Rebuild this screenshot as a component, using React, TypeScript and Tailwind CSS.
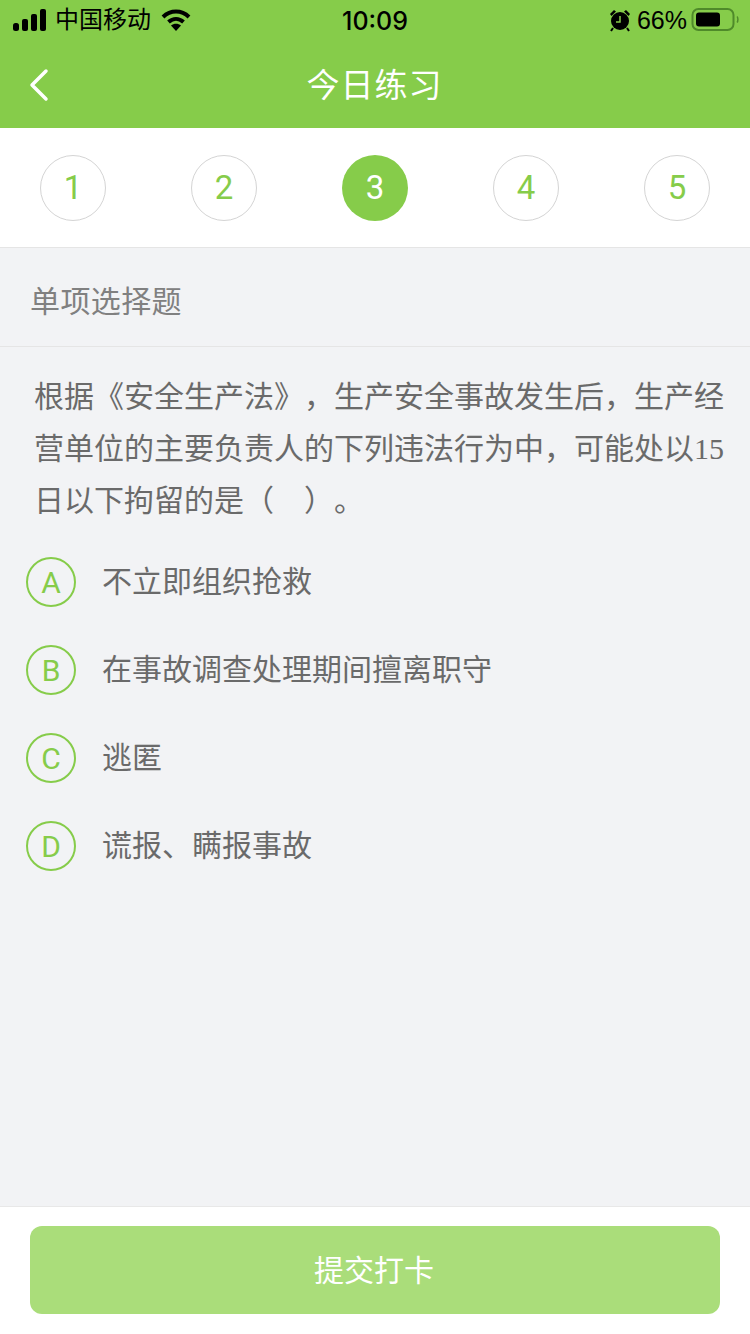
import { ChevronLeft } from "lucide-react";

const FONT = "font-['Liberation_Sans','Noto_Sans_CJK_SC',sans-serif]";

const steps = [1, 2, 3, 4, 5];

const options = [
  { key: "A", text: "不立即组织抢救" },
  { key: "B", text: "在事故调查处理期间擅离职守" },
  { key: "C", text: "逃匿" },
  { key: "D", text: "谎报、瞒报事故" },
];

function StatusBar() {
  return (
    <div className="relative flex h-[40px] items-center justify-between pl-[13px] pr-[11px] text-black">
      <div className="flex items-center">
        <svg width="34" height="22" viewBox="0 0 34 22" fill="#000">
          <rect x="0" y="14" width="6" height="8" rx="2.5" />
          <rect x="9" y="10" width="6" height="12" rx="2" />
          <rect x="18" y="5" width="6" height="17" rx="2" />
          <rect x="27" y="0" width="6" height="22" rx="2" />
        </svg>
        <span className="ml-[8px] text-[24px] leading-none">中国移动</span>
        <svg className="ml-[10px]" width="30" height="22" viewBox="0 0 30 22" fill="none" stroke="#000" strokeWidth="4">
          <path d="M2 8C9.500 .8 20.500 .8 28 8" />
          <path d="M7.500 13c4.500-4 10.500-4 15 0" />
          <path d="M15 22l-5-5.500c2.800-2.200 7.200-2.200 10 0z" fill="#000" stroke="none" />
        </svg>
      </div>
      <span className="absolute left-1/2 top-[7px] -translate-x-1/2 font-['Inter',sans-serif] text-[25px] font-medium leading-[28px]">
        10:09
      </span>
      <div className="flex items-center">
        <svg width="22" height="24" viewBox="0 0 22 24" fill="#000">
          <circle cx="11" cy="13" r="9" />
          <path d="M1 6l4-4 2 1.500-4.500 4.500zM21 6l-4-4-2 1.500 4.500 4.500z" />
          <path d="M11 8v6H7" fill="none" stroke="#86cc4a" strokeWidth="1.500" />
          <path d="M4 20l-2 3M18 20l2 3" stroke="#000" strokeWidth="2" />
        </svg>
        <span className="ml-[6px] text-[25px] leading-none">66%</span>
        <svg className="ml-[4px]" width="48" height="24" viewBox="0 0 48 24" fill="none">
          <rect x="1.500" y="1" width="41" height="21" rx="6" stroke="#4f8a2a" strokeWidth="2" />
          <rect x="5" y="4.500" width="24" height="14" rx="3" fill="#000" />
          <path d="M46 8.500c1.200 1 1.200 5 0 6" stroke="#4f8a2a" strokeWidth="1.500" />
        </svg>
      </div>
    </div>
  );
}

export default function App() {
  return (
    <div lang="zh-CN" className={`${FONT} flex h-[1334px] w-[750px] flex-col overflow-hidden bg-[#f2f3f5] [text-spacing-trim:space-all]`}>
      <header className="h-[128px] shrink-0 bg-[#86cc4a]">
        <StatusBar />
        <div className="relative flex h-[88px] items-center justify-center pt-[2px]">
          <ChevronLeft className="absolute left-[11px] top-[17px] text-white" size={56} strokeWidth={3.5} absoluteStrokeWidth />
          <h1 className="mr-[1px] text-[33px] font-normal leading-none tracking-[1px] text-white">今日练习</h1>
        </div>
      </header>

      <div className="flex h-[120px] shrink-0 items-center justify-between border-b border-[#e5e5e5] bg-white px-[40px] pt-[1px] font-['Roboto',sans-serif]">
        {steps.map((n) =>
          n === 3 ? (
            <div key={n} className="flex h-[66px] w-[66px] items-center justify-center rounded-full bg-[#86cc4a] text-[33px] text-white">
              {n}
            </div>
          ) : (
            <div key={n} className="flex h-[66px] w-[66px] items-center justify-center rounded-full border border-[#d4d4d4] text-[33px] text-[#86cc4a]">
              {n}
            </div>
          ),
        )}
      </div>

      <div className="flex h-[99px] shrink-0 items-center border-b border-[#e5e5e5] px-[30px] pt-[8px] text-[30px] tracking-[0.4px] text-[#808080]">
        单项选择题
      </div>

      <p className="shrink-0 pl-[34px] pr-[25px] pt-[24px] text-[30px] leading-[52px] text-[#6a6a6a]">
        根据《安全生产法》，生产安全事故发生后，生产经营单位的主要负责人的下列违法行为中，可能处以
        <span className="font-['Liberation_Serif',serif]">15</span>
        日以下拘留的是（　）。
      </p>

      <ul className="mt-[30px] flex flex-1 flex-col gap-[38px] pl-[26px]">
        {options.map((o) => (
          <li key={o.key} className="flex h-[50px] items-center">
            <span className="flex h-[50px] w-[50px] shrink-0 items-center justify-center rounded-full border-2 border-[#86cc4a] font-['Roboto',sans-serif] text-[30px] text-[#86cc4a]">
              {o.key}
            </span>
            <span className="ml-[26px] pb-[2px] text-[30px] text-[#6a6a6a]">{o.text}</span>
          </li>
        ))}
      </ul>

      <footer className="h-[128px] shrink-0 border-t border-[#e8e8e8] bg-white px-[30px] pt-[19px]">
        <button className="flex h-[88px] w-full items-center justify-center rounded-[12px] bg-[#aadd7a] pr-[2px] text-[30px] text-white">
          提交打卡
        </button>
      </footer>
    </div>
  );
}
